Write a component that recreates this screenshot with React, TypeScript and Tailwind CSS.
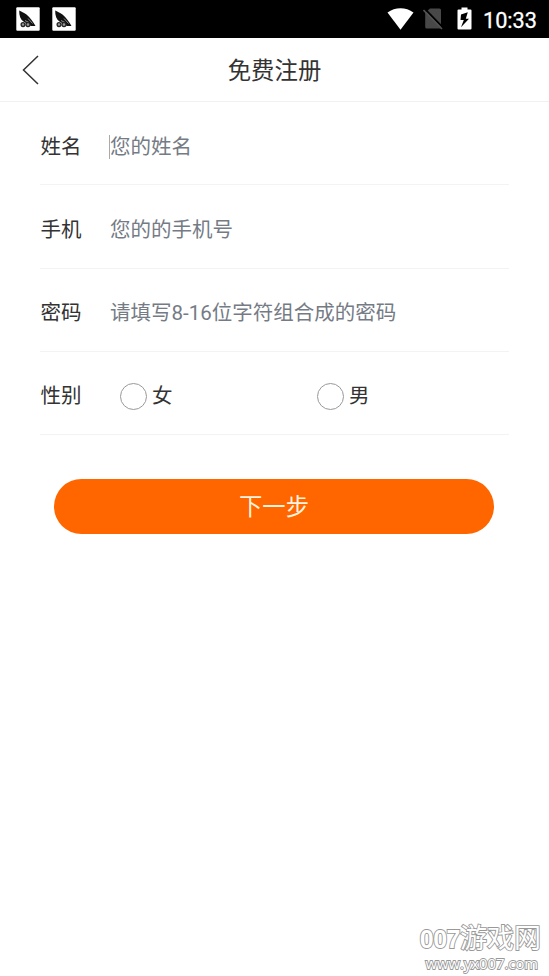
import { useState } from "react"
import clsx from "clsx"

const fields = [
    { name: "name", label: "姓名", placeholder: "您的姓名", type: "text" },
    { name: "phone", label: "手机", placeholder: "您的的手机号", type: "tel" },
    { name: "password", label: "密码", placeholder: "请填写8-16位字符组合成的密码", type: "password" },
]

const genders = ["女", "男"]

function NotificationIcon() {
    return (
        <svg viewBox="0 0 24 24" className="h-6 w-6">
            <rect x="0.3" y="0.3" width="23.4" height="23.4" rx="1" fill="#fff" />
            <path d="M3.200 3.500C3 8.500 4.500 12.500 7.500 14.500l4 2.500 3.500 2H19.500C17.500 15 14 10.500 10.500 7.500 8 5.500 5 4.500 3.200 3.500Z" fill="#111" />
            <path d="M9 13.500l4 2M12 11.500l4.500 5" stroke="#bbb" strokeWidth="0.7" />
            <circle cx="7" cy="17.600" r="1.900" fill="#999" stroke="#222" strokeWidth="1.300" />
            <circle cx="12" cy="17.600" r="2" fill="#999" stroke="#222" strokeWidth="1.300" />
        </svg>
    )
}

function StatusBar() {
    return (
        <div className="flex h-[38px] items-center justify-between bg-black pr-3 pl-[15.500px]">
            <div className="flex gap-[12.500px]">
                <NotificationIcon />
                <NotificationIcon />
            </div>
            <div className="flex items-center">
                <svg viewBox="0 0 27 22" className="h-[22px] w-[27px]">
                    <path d="M0.500 4.500C8-1.200 19-1.200 26.500 4.500L13.500 21.800Z" fill="#fff" />
                </svg>
                <svg viewBox="0 0 20 22" className="mt-px ml-[9px] h-[22px] w-5">
                    <path d="M7 0.500H16.500Q18 0.500 18 2V20Q18 20.500 17 20.500H3.800Q2.200 20.500 2.200 19V4.800Z" fill="#484848" />
                    <path d="M1.500 0.500L20 19.500" stroke="#000" strokeWidth="1.800" />
                    <path d="M0.500 2L19 21" stroke="#525252" strokeWidth="1.600" />
                </svg>
                <svg viewBox="0 0 15 23" className="ml-3.5 h-[23px] w-[15px]">
                    <path d="M4.500 0.500h6v2h3q1 0 1 1v18q0 1-1 1h-12q-1 0-1-1v-18q0-1 1-1h3z" fill="#fff" />
                    <path d="M10.800 5.200L4 7.500L3.500 13h3.300L4 20.300l8-8.600H8.800z" fill="#000" />
                </svg>
                <span className="mt-[3px] ml-[11px] font-[Roboto,sans-serif] text-[21.700px] leading-none text-white [-webkit-text-stroke:0.3px_#fff]">10:33</span>
            </div>
        </div>
    )
}

function Header() {
    return (
        <header className="grid h-16 grid-cols-[60px_1fr_60px] items-center border-b border-[#f1f1f1]">
            <button aria-label="返回" className="pl-[22px]">
                <svg viewBox="0 0 18 30" className="h-[30px] w-[18px]" fill="none" stroke="#333" strokeWidth="1.500">
                    <path d="M16 1L1.500 15L16 29" />
                </svg>
            </button>
            <h1 className="pt-1 text-center text-[23.400px] leading-none">免费注册</h1>
        </header>
    )
}

function Watermark() {
    return (
        <footer className="mt-auto mr-2 flex flex-col items-end pb-1 text-white [-webkit-text-stroke:1.8px_#999] [paint-order:stroke_fill]">
            <div className="text-[27px] leading-[29px]">
                <span className="font-['Liberation_Sans',sans-serif] text-[25px] font-bold tracking-[-0.5px]">007</span>游戏网
            </div>
            <div className="mr-[3px] font-['Open_Sans',sans-serif] text-[14.800px] leading-[18px]">www.yx007.com</div>
        </footer>
    )
}

export default function App() {
    const [focused, setFocused] = useState("name")
    const [gender, setGender] = useState("")

    return (
        <div className="flex h-[976px] w-[549px] flex-col bg-white font-[Roboto,'Noto_Sans_CJK_SC',sans-serif] text-[#333]">
            <StatusBar />
            <Header />
            <form className="flex flex-col px-10" onSubmit={(e) => e.preventDefault()}>
                {fields.map((field) => (
                    <label key={field.name} className="flex h-[83.300px] items-center border-b border-[#f3f3f3] pt-2 text-[20.500px]">
                        <span className="w-[69px] pl-[0.5px]">{field.label}</span>
                        <span className={clsx("h-6 w-px", focused === field.name && "bg-[#aaa]")} />
                        <input
                            name={field.name}
                            type={field.type}
                            placeholder={field.placeholder}
                            onFocus={() => setFocused(field.name)}
                            className="min-w-0 flex-1 outline-none placeholder:text-[#757b85]"
                        />
                    </label>
                ))}
                <div className="flex h-[83.300px] items-center border-b border-[#f3f3f3] pt-1.5 text-[20.500px]">
                    <span className="w-20 shrink-0 pl-[0.5px]">性别</span>
                    {genders.map((item) => (
                        <button key={item} type="button" className="flex w-[197px] shrink-0 items-center gap-[5px] last:w-auto" onClick={() => setGender(item)}>
                            <span className={clsx("h-[27px] w-[27px] rounded-full border-[1.500px] border-[#999]", gender === item && "bg-[#ff6600]")} />
                            {item}
                        </button>
                    ))}
                </div>
                <button className="mr-[15px] ml-3.5 mt-11 h-[55px] rounded-full bg-[#ff6600] pt-px text-[23.300px] text-[#fff3df]">下一步</button>
            </form>
            <Watermark />
        </div>
    )
}
